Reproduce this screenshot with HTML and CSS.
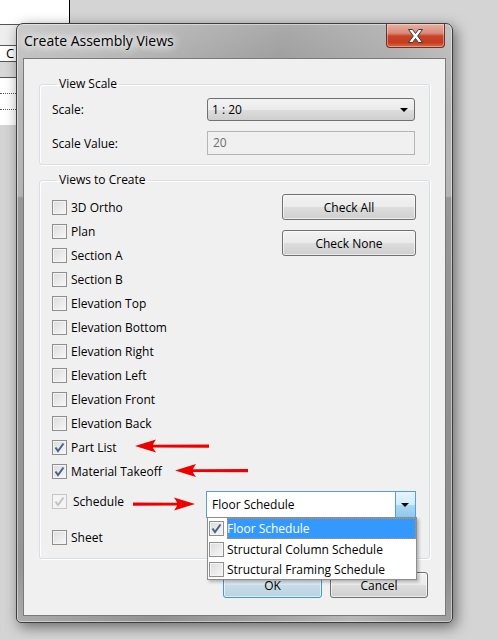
FILE: index.html
```html
<!DOCTYPE html>
<html lang="en">
<head>
  <meta charset="UTF-8" />
  <title>Create Assembly Views</title>
  <link rel="stylesheet" href="styles.css">
</head>
<body>
  <!-- spreadsheet window behind the dialog -->
  <div class="sheet">
    <div class="sheet-top"></div>
    <div class="sheet-row head"></div>
    <div class="sheet-row"><span>C</span></div>
    <div class="sheet-row band"></div>
    <div class="sheet-row dotted"></div>
    <div class="sheet-row dotted"></div>
    <div class="sheet-row blank"></div>
  </div>

  <!-- DIALOG -->
  <div class="window">
    <div class="titlebar">
      <span class="title">Create Assembly Views</span>
      <button class="close" aria-label="Close">
        <svg width="15" height="14" viewBox="0 0 15 14"><polygon points="0.5,0.5 4.5,0.5 7.5,4.5 10.5,0.5 14.5,0.5 9.7,7 14.5,13.5 10.5,13.5 7.5,9.5 4.5,13.5 0.5,13.5 5.3,7" fill="#fff" stroke="#3a3a3a" stroke-width="1"/></svg>
      </button>
    </div>

    <div class="client">
      <fieldset class="group">
        <legend>View Scale</legend>
        <div class="scale-grid">
          <label>Scale:</label>
          <div class="dropdown">1 : 20<span class="caret"></span></div>
          <label>Scale Value:</label>
          <div class="field disabled">20</div>
        </div>
      </fieldset>

      <fieldset class="group views">
        <legend>Views to Create</legend>
        <div class="views-top">
          <div class="checks">
            <div class="check"><span class="box"></span>3D Ortho</div>
            <div class="check"><span class="box"></span>Plan</div>
            <div class="check"><span class="box"></span>Section A</div>
            <div class="check"><span class="box"></span>Section B</div>
            <div class="check"><span class="box"></span>Elevation Top</div>
            <div class="check"><span class="box"></span>Elevation Bottom</div>
            <div class="check"><span class="box"></span>Elevation Right</div>
            <div class="check"><span class="box"></span>Elevation Left</div>
            <div class="check"><span class="box"></span>Elevation Front</div>
            <div class="check"><span class="box"></span>Elevation Back</div>
            <div class="check"><span class="box on"><svg viewBox="0 0 11 11"><path d="M1.5 5.5 L4 9 L9.5 1.5" /></svg></span>Part List</div>
            <div class="check"><span class="box on"><svg viewBox="0 0 11 11"><path d="M1.5 5.5 L4 9 L9.5 1.5" /></svg></span>Material Takeoff</div>
          </div>
          <div class="side">
            <button class="btn">Check All</button>
            <button class="btn">Check None</button>
          </div>
        </div>

        <div class="check schedule">
          <span class="box on off"><svg viewBox="0 0 11 11"><path d="M1.5 5.5 L4 9 L9.5 1.5" /></svg></span>
          <span class="schedule-label">Schedule</span>
          <div class="combo">
            <span class="combo-text">Floor Schedule</span>
            <span class="combo-btn"><span class="caret"></span></span>
            <ul class="combo-list">
              <li class="picked"><span class="box on"><svg viewBox="0 0 11 11"><path d="M1.5 5.5 L4 9 L9.5 1.5" /></svg></span><span class="item-text">Floor Schedule</span></li>
              <li><span class="box"></span><span class="item-text">Structural Column Schedule</span></li>
              <li><span class="box"></span><span class="item-text">Structural Framing Schedule</span></li>
            </ul>
          </div>
        </div>
        <div class="check last"><span class="box"></span>Sheet</div>
      </fieldset>

      <div class="actions">
        <button class="btn default">OK</button>
        <button class="btn">Cancel</button>
      </div>
    </div>
  </div>

  <!-- red pointer arrows drawn on top -->
  <svg class="marks" width="498" height="639" viewBox="0 0 498 639">
    <g fill="#ee0000">
      <path d="M135 446 L156 439.5 Q153 444 153 444.8 L209 444.5 L209 447.8 L153 447.6 Q153 448.5 156 452.5 Z"/>
      <path d="M175 470.5 L196 464 Q193 468.5 193 469.3 L248 469 L248 472.3 L193 472.1 Q193 473 196 477 Z"/>
      <path d="M195 504 L174 497.5 Q177 502 177 502.8 L133 502.5 L133 505.8 L177 505.6 Q177 506.5 174 510.5 Z"/>
    </g>
  </svg>
</body>
</html>
```

FILE: styles.css
```css
/* BASE */
* { box-sizing:border-box; margin:0; padding:0; }
body {
  position:relative; width:498px; height:639px; overflow:hidden;
  background:#d4d4d4; color:#000;
  font-family:"Open Sans", "Noto Sans", sans-serif; font-size:12px;
}
button { font:inherit; color:inherit; }

/* SHEET BEHIND */
.sheet { position:absolute; left:0; top:0; width:70px; }
.sheet-top { height:24px; background:#fff; border-right:1px solid #000; }
.sheet-row {
  height:16px; background:#fff; border-top:1px solid #555;
  font-size:13px; line-height:15px; padding-left:6px;
}
.sheet-row.head { height:21px; background:#eeeeee; }
.sheet-row.band { height:17px; background:#d8d8d8; border-bottom:1px solid #555; }
.sheet-row.dotted { border-top:none; border-bottom:1px dotted #555; }
.sheet-row.blank { border-top:none; height:15px; }

/* WINDOW FRAME */
.window {
  position:absolute; left:16px; top:23px; width:437px; height:600px;
  display:flex; flex-direction:column;
  padding:0 6px 6px;
  border:1px solid #3d3d3d; border-radius:7px 7px 5px 5px;
  background:
    linear-gradient(180deg, rgba(255,255,255,0.25), rgba(255,255,255,0) 15%, rgba(0,0,0,0) 172px, rgba(0,0,0,0.16) 174px, rgba(0,0,0,0.12) 540px, rgba(255,255,255,0.05) 100%),
    linear-gradient(102deg, #b9b9b9 0%, #a8a8a8 22%, #8e8e8e 48%, #a1a1a1 68%, #b6b6b6 82%, #9a9a9a 100%);
  box-shadow:inset 0 0 0 1px rgba(255,255,255,0.45), 3px 4px 14px rgba(0,0,0,0.5);
}
.titlebar { height:34px; display:flex; align-items:flex-start; flex-shrink:0; }
.title {
  padding-left:1px; line-height:34px; font-size:14px; color:#000;
  text-shadow:0 0 8px #fff, 0 0 10px #fff, 0 0 12px #fff;
}
.close {
  margin-left:auto; margin-right:1px; width:59px; height:24px;
  display:flex; align-items:center; justify-content:center;
  border:1px solid #6a3328; border-top:none; border-radius:0 0 4px 4px;
  background:linear-gradient(180deg, #eab0a2 0%, #d98a78 40%, #c8452a 52%, #c53b1d 80%, #d86a48 100%);
  box-shadow:inset 0 0 0 1px rgba(255,255,255,0.35);
}

/* CLIENT AREA */
.client {
  flex:1; display:flex; flex-direction:column;
  background:#f0f0f0; border:1px solid #7a7a7a;
  padding:0 17px 0 15px;
}
.group {
  border:1px solid #d5dfe5; border-radius:3px;
  box-shadow:inset 1px 1px 0 #fff, 1px 1px 0 #fff;
  padding:6px 13px 9px 12px; margin-top:17px; margin-right:-2px;
}
.group legend { padding:0 2px; margin-left:5px; line-height:16px; }
.views { margin-top:7px; padding-top:7px; }

/* VIEW SCALE */
.scale-grid {
  display:grid; grid-template-columns:155px 208px; row-gap:10px; align-items:center;
}
.dropdown {
  position:relative; height:23px; padding:0 4px; line-height:21px;
  border:1px solid #707070; border-radius:3px;
  background:linear-gradient(180deg, #f2f2f2 0%, #ebebeb 50%, #dddddd 51%, #cfcfcf 100%);
  display:flex; align-items:center; justify-content:space-between;
}
.caret {
  width:0; height:0; margin-right:2px;
  border-left:4px solid transparent; border-right:4px solid transparent;
  border-top:4px solid #000;
}
.field {
  height:24px; padding:0 5px; line-height:22px;
  border:1px solid #b5b5b5; background:#f0f0f0;
}
.field.disabled { color:#6d6d6d; }

/* VIEWS TO CREATE */
.views-top { display:flex; justify-content:space-between; }
.check { height:24px; display:flex; align-items:center; gap:4px; }
.box {
  width:15px; height:15px; flex-shrink:0;
  border:1px solid #8e8f8f;
  background:linear-gradient(135deg, #dcdcdc 0%, #f7f7f7 100%);
  box-shadow:inset 0 0 0 1px #f4f4f4;
  display:flex; align-items:center; justify-content:center;
}
.box svg { width:11px; height:11px; }
.box path { fill:none; stroke:#4a5f8c; stroke-width:2; }
.box.off { border-color:#c6c6c6; background:#f4f4f4; }
.box.off path { stroke:#c2c2c2; }
.side { display:flex; flex-direction:column; gap:10px; margin-top:-1px; }
.btn {
  height:26px; width:134px;
  border:1px solid #707070; border-radius:3px;
  background:linear-gradient(180deg, #f2f2f2 0%, #ebebeb 50%, #dddddd 51%, #cfcfcf 100%);
  box-shadow:inset 0 0 0 1px rgba(255,255,255,0.6);
}
.schedule { margin-top:6px; }
.schedule-label { margin-left:2px; }
.last { margin-top:12px; }

/* SCHEDULE COMBO */
.combo {
  position:relative; margin-left:auto; align-self:flex-start; margin-top:2px;
  width:210px; height:27px; display:flex;
  border:1px solid #569de5; background:#fff;
}
.combo-text { flex:1; padding-left:5px; line-height:25px; }
.combo-btn {
  width:20px; display:flex; align-items:center; justify-content:center;
  border-left:1px solid #569de5;
  background:linear-gradient(180deg, #e7f4fc 0%, #d0ecfb 50%, #a9d8f4 51%, #8ec9ec 100%);
}
.combo-list {
  position:absolute; left:0; top:100%; width:210px; list-style:none;
  background:#fff; border:1px solid #8d8d8d;
  box-shadow:2px 2px 3px rgba(0,0,0,0.25);
}
.combo-list li { height:20px; display:flex; align-items:center; gap:3px; padding-left:1px; }
.combo-list li:first-child { height:21px; }
.item-text { flex:1; height:20px; line-height:21px; }
.picked .item-text {
  height:21px; background:#3399ff; color:#fff;
  outline:1px dotted #e88a2c; outline-offset:-1px;
}

/* BUTTON ROW */
.actions { display:flex; justify-content:flex-end; gap:8px; margin-top:13px; }
.actions .btn { width:98px; }
.actions .btn.default {
  width:99px; border-color:#3c9ad6;
  background:linear-gradient(180deg, #e4eef5 0%, #d7e6f0 50%, #c7dbe8 51%, #bcd3e2 100%);
}

/* OVERLAY */
.marks { position:absolute; left:0; top:0; pointer-events:none; }
```
